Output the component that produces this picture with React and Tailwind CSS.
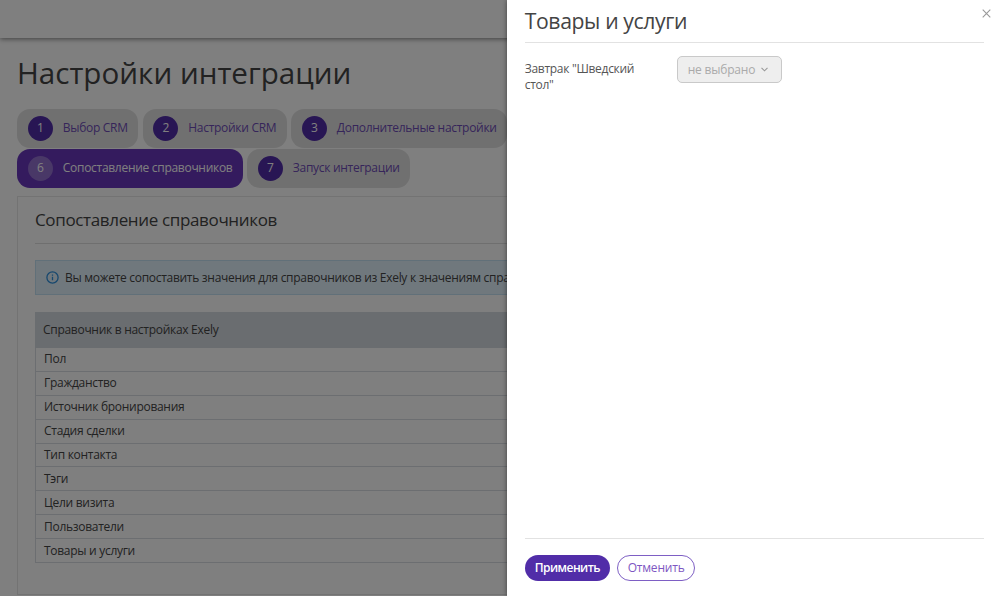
import React from 'react'

const steps = [
    { id: 1, title: 'Выбор CRM', width: 'w-[121px]' },
    { id: 2, title: 'Настройки CRM', width: 'w-[144px]' },
    { id: 3, title: 'Дополнительные настройки', width: 'w-[216px]' },
    { id: 6, title: 'Сопоставление справочников', width: 'w-[226px]', active: true },
    { id: 7, title: 'Запуск интеграции', width: 'w-[163px]' },
]

const directories = [
    'Пол',
    'Гражданство',
    'Источник бронирования',
    'Стадия сделки',
    'Тип контакта',
    'Тэги',
    'Цели визита',
    'Пользователи',
    'Товары и услуги',
]

const Step = ({ step }) => (
    <button
        className={`flex h-[39px] shrink-0 items-center rounded-[13px] pl-[10.8px] whitespace-nowrap ${step.width} ${step.active ? 'bg-[#6836bc] text-white' : 'bg-[#e1e1e1] text-[#6d4bb5]'}`}
    >
        <span
            className={`mr-[10px] flex size-[25px] items-center justify-center rounded-full pb-[2px] text-white ${step.active ? 'bg-[#9370cf]' : 'bg-[#512da8]'}`}
        >
            {step.id}
        </span>
        <span className="pb-[2px]">{step.title}</span>
    </button>
)

const InfoIcon = () => (
    <svg className="mr-[6px] size-[13px] shrink-0" viewBox="0 0 13 13" fill="none" stroke="#2d8fdc" strokeWidth="1.3">
        <circle cx="6.5" cy="6.5" r="5.6" />
        <path d="M6.5 5.8V9.3M6.5 3.6V4.8" />
    </svg>
)

const IntegrationPage = () => (
    <div className="flex h-full flex-col">
        <header className="h-[38px] shrink-0 bg-white shadow-[0_1px_5px_rgba(0,0,0,0.5)]" />

        <main className="flex-1 pt-[13px] pl-[17px]">
            <h1 className="mb-[15px] text-[29.6px] leading-[43px] tracking-normal text-[#444]">Настройки интеграции</h1>

            <div className="flex gap-[4.5px]">
                {steps.slice(0, 3).map((step) => <Step key={step.id} step={step} />)}
            </div>
            <div className="mt-[0.6px] flex gap-[4px]">
                {steps.slice(3).map((step) => <Step key={step.id} step={step} />)}
            </div>

            <section className="mt-[8.4px] h-[399px] w-[1000px] border border-[#e6e6e6] px-[17px]">
                <h2 className="h-[47px] border-b border-[#dedede] text-[17px] leading-[46px] tracking-[-0.35px] text-[#444]">
                    Сопоставление справочников
                </h2>

                <div className="mt-4 flex h-[35px] items-center border border-[#c3e0f3] bg-[#e1f1fb] pl-[10px] whitespace-nowrap text-[#444]">
                    <InfoIcon />
                    Вы можете сопоставить значения для справочников из Exely к значениям справочников из CRM
                </div>

                <table className="mt-[17px] w-full border-separate border-spacing-0 text-left text-[#444]">
                    <thead>
                        <tr>
                            <th className="h-[36px] bg-[#d4dae0] p-0 pb-px pl-[8px] font-normal">Справочник в настройках Exely</th>
                        </tr>
                    </thead>
                    <tbody>
                        {directories.map((name) => (
                            <tr key={name}>
                                <td className="h-[23.9px] border-b border-l border-[#d8dce2] p-0 pl-[8px] leading-[22px]">{name}</td>
                            </tr>
                        ))}
                    </tbody>
                </table>
            </section>
        </main>
    </div>
)

const SidePanel = () => (
    <aside className="absolute inset-y-0 right-0 flex w-[492.6px] flex-col bg-white pr-4 pl-[17.3px] text-[#555] shadow-[0_0_5px_rgba(0,0,0,0.5)]">
        <button className="absolute top-[9px] right-[9px]" aria-label="Закрыть">
            <svg className="size-[9px]" viewBox="0 0 9 9" fill="none" stroke="#999" strokeWidth="1.1">
                <path d="M0.7 0.7L8.3 8.3M8.3 0.7L0.7 8.3" />
            </svg>
        </button>

        <h2 className="h-[43px] border-b border-[#e2e2e2] text-[21.2px] leading-[41px] tracking-[-0.38px] text-[#444]">Товары и услуги</h2>

        <div className="flex flex-1 pt-[13px]">
            <div className="w-[152px] pt-[5px] pr-6 leading-[16.3px]">Завтрак "Шведский стол"</div>
            <button
                disabled
                className="flex h-[27px] w-[105px] items-center rounded-[5px] border border-[#c9c9c9] bg-[#eee] pl-[10px] whitespace-nowrap text-[#aaa]"
            >
                <span className="tracking-[-0.2px]">не выбрано</span>
                <svg className="ml-[6px] h-[5px] w-[7px]" viewBox="0 0 7 5" fill="none" stroke="#999" strokeWidth="1.1">
                    <path d="M0.5 0.8L3.5 3.8L6.5 0.8" />
                </svg>
            </button>
        </div>

        <footer className="flex h-[58px] gap-[7px] border-t border-[#e2e2e2] pt-4">
            <button className="h-[26px] w-[85.4px] rounded-full bg-[#512da8] pb-[2px] font-semibold tracking-[-0.55px] text-white">Применить</button>
            <button className="h-[26px] w-[78px] rounded-full border border-[#7e5fc4] pb-[2px] tracking-[-0.2px] text-[#7e57c2]">Отменить</button>
        </footer>
    </aside>
)

const App = () => {
    return (
        <div className="relative h-[596px] w-[1000px] overflow-hidden bg-white font-['Open_Sans',sans-serif] text-[12px] leading-[17px] tracking-[-0.29px]">
            <IntegrationPage />
            <div className="absolute inset-0 bg-black/50" />
            <SidePanel />
        </div>
    )
}

export default App
